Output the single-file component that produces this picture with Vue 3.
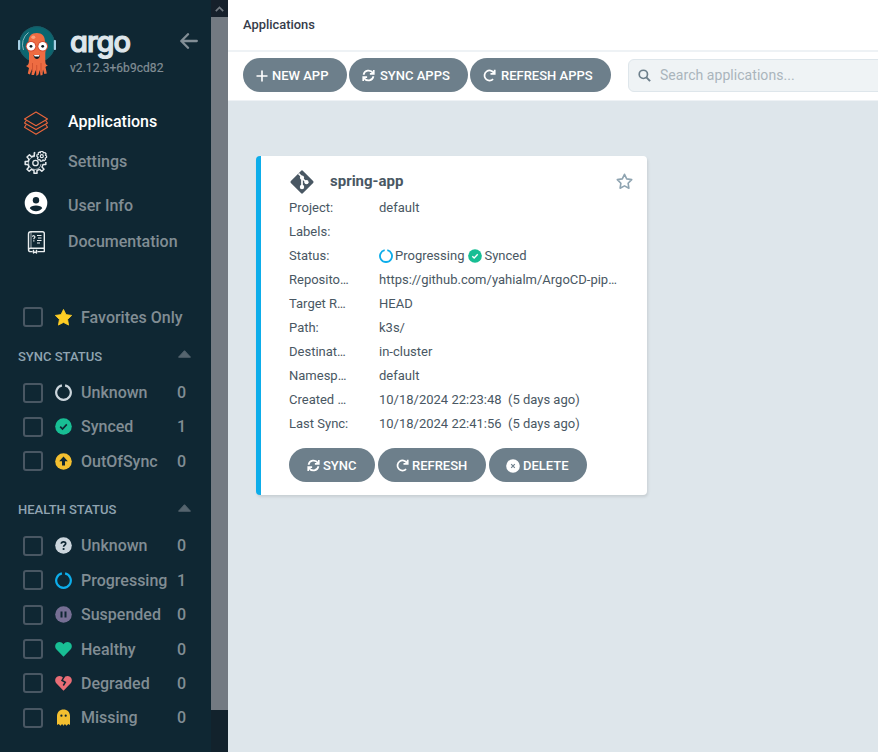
<script setup>
import { h } from 'vue'

const nav = [
  { label: 'Applications', icon: 'layers', active: true },
  { label: 'Settings', icon: 'gears' },
  { label: 'User Info', icon: 'user' },
  { label: 'Documentation', icon: 'book' },
]
const groups = [
  {
    title: 'SYNC STATUS',
    items: [
      { label: 'Unknown', icon: 'ring', color: '#ccd6dd', count: 0 },
      { label: 'Synced', icon: 'check', color: '#18be94', count: 1 },
      { label: 'OutOfSync', icon: 'up', color: '#f4c030', count: 0 },
    ],
  },
  {
    title: 'HEALTH STATUS',
    items: [
      { label: 'Unknown', icon: 'question', color: '#ccd6dd', count: 0 },
      { label: 'Progressing', icon: 'ring', color: '#0dadea', count: 1 },
      { label: 'Suspended', icon: 'pause', color: '#766f94', count: 0 },
      { label: 'Healthy', icon: 'heart', color: '#18be94', count: 0 },
      { label: 'Degraded', icon: 'broken', color: '#e96d76', count: 0 },
      { label: 'Missing', icon: 'ghost', color: '#f4c030', count: 0 },
    ],
  },
]
const details = [
  ['Project:', 'default'],
  ['Labels:', ''],
  ['Status:', null],
  ['Reposito…', 'https://github.com/yahialm/ArgoCD-pip…'],
  ['Target R…', 'HEAD'],
  ['Path:', 'k3s/'],
  ['Destinat…', 'in-cluster'],
  ['Namesp…', 'default'],
  ['Created …', '10/18/2024 22:23:48  (5 days ago)'],
  ['Last Sync:', '10/18/2024 22:41:56  (5 days ago)'],
]

const STAR = 'M8.5 .4 11 5.6 16.7 6.4 12.6 10.4 13.6 16.1 8.5 13.4 3.4 16.1 4.4 10.4 .3 6.4 6 5.6Z'
const HEART = 'M8.5 15.8 1.5 8.6C-.6 6.300 0 3.100 2 1.800 4.200.4 6.700 1 8.500 3.200 10.300 1 12.800.4 15 1.800 17 3.100 17.600 6.300 15.500 8.600Z'

const Icon = (props) => {
  const c = props.color
  const dark = '#0f2733'
  const disc = () => h('circle', { cx: 8.5, cy: 8.5, r: 8.3, fill: c })
  const shapes = {
    ring: () => [h('path', { d: 'M10.100 1.400A7.300 7.300 0 1 1 6.900 1.400', fill: 'none', stroke: c, 'stroke-width': 2.200 })],
    check: () => [disc(), h('path', { d: 'M5.200 8.700 7.500 11 11.800 6.400', fill: 'none', stroke: props.ink || dark, 'stroke-width': 1.700 })],
    up: () => [disc(), h('path', { d: 'M8.500 3.600 12.800 8.300H10V12.600H7V8.300H4.200Z', fill: dark })],
    question: () => [disc(), h('path', { d: 'M6.300 6.700C6.500 4.400 10.700 4.200 10.700 6.600 10.700 8.200 8.600 8 8.600 9.700', fill: 'none', stroke: dark, 'stroke-width': 1.700 }), h('circle', { cx: 8.6, cy: 12, r: 1.1, fill: dark })],
    pause: () => [disc(), h('path', { d: 'M6.500 5.500V11.500M10.500 5.500V11.500', stroke: dark, 'stroke-width': 2 })],
    heart: () => [h('path', { d: HEART, fill: c })],
    broken: () => [h('path', { d: HEART, fill: c }), h('path', { d: 'M9.300 1.500 7 5.500 10.300 7.300 8.300 10.500', fill: 'none', stroke: dark, 'stroke-width': 1.500 })],
    ghost: () => [
      h('path', { d: 'M2 16V7.300C2 3 4.800.4 8.500.4S15 3 15 7.300V16L13.300 15 11.500 16.700 9.900 15 8.500 16.700 7.100 15 5.500 16.700 3.700 15Z', fill: c }),
      h('circle', { cx: 6.4, cy: 6.7, r: 1.1, fill: dark }),
      h('circle', { cx: 10.7, cy: 6.7, r: 1.1, fill: dark }),
    ],
    star: () => [h('path', { d: STAR, fill: c, stroke: c, 'stroke-width': 0.8, 'stroke-linejoin': 'round' })],
    staro: () => [h('path', { d: 'M8.500 1.300 10.700 5.900 15.700 6.600 12.100 10.200 12.900 15.200 8.500 12.900 4.100 15.200 4.900 10.200 1.300 6.600 6.300 5.900Z', fill: 'none', stroke: c, 'stroke-width': 1.600, 'stroke-linejoin': 'round' })],
    plus: () => [h('path', { d: 'M8.500 1.500V15.500M1.500 8.500H15.500', stroke: c, 'stroke-width': 2.300, 'stroke-linecap': 'round' })],
    sync: () => [h('path', { d: 'M2 7.500A6.700 6.700 0 0 1 14.300 5.300M15 9.500A6.700 6.700 0 0 1 2.700 11.700M15.400 1.200V6.300H10.300M1.600 15.800V10.700H6.700', fill: 'none', stroke: c, 'stroke-width': 2.200 })],
    redo: () => [h('path', { d: 'M14.300 5.300A6.600 6.600 0 1 0 13.200 13.200M15.300 1V6.500H9.800', fill: 'none', stroke: c, 'stroke-width': 2.300 })],
    times: () => [disc(), h('path', { d: 'M6.300 6.300 10.700 10.700M10.700 6.300 6.300 10.700', stroke: '#6d7f8b', 'stroke-width': 1.400 })],
    search: () => [h('circle', { cx: 7, cy: 7, r: 5.4, fill: 'none', stroke: c, 'stroke-width': 2.200 }), h('path', { d: 'M11 11 15.800 15.800', stroke: c, 'stroke-width': 2.600 })],
  }
  return h('svg', { viewBox: '0 0 17 17', width: props.size || 17, height: props.size || 17 }, shapes[props.name]())
}
Icon.props = ['name', 'color', 'size', 'ink']
</script>

<template>
  <div class="page">
    <aside class="sidebar">
      <header class="brand">
        <svg class="octopus" width="40" height="52" viewBox="17 25 40 52">
          <circle cx="37" cy="44.300" r="18" fill="#0b6670" />
          <circle cx="37" cy="44.300" r="17.500" fill="none" stroke="#1c5965" />
          <path d="M23.500 50A15 15 0 0 1 28.500 32.500" fill="none" stroke="#86b7bd" stroke-width="1" />
          <rect x="18" y="40" width="2.200" height="10" rx=".8" fill="#a6cfe4" />
          <rect x="53.800" y="40" width="2.200" height="10" rx=".8" fill="#a6cfe4" />
          <path d="M28.500 42C28.500 36 31.500 33 36.800 33S45 36 45 42C46.500 46 45.800 50 45.300 53V61C45.500 64 46 65.500 48 65L45.500 67 46.800 73.500 44.300 74 43 69.500 42.500 75 40.500 75.500 39.800 70 38.500 74.500 36.500 76 35.800 70 34 75 31.500 75 32 69 29.800 74.500 27.800 73.500 29 68 26 66C28.500 65.500 29 63 29 60V53C27.500 50 27 46 28.500 42Z" fill="#ee6c42" />
          <path d="M32.500 63V72M36.700 65V75M41 63V73" stroke="#c94d2d" stroke-width=".8" />
          <ellipse cx="33.300" cy="37.300" rx="2" ry="1.700" fill="#f8a17d" />
          <circle cx="31" cy="46.300" r="5.300" fill="#d64b32" />
          <circle cx="42.700" cy="46.300" r="5.300" fill="#d64b32" />
          <circle cx="31" cy="46.300" r="4.300" fill="#fff" />
          <circle cx="42.700" cy="46.300" r="4.300" fill="#fff" />
          <circle cx="31" cy="46.300" r="1.400" fill="#101c24" />
          <circle cx="42.700" cy="46.300" r="1.400" fill="#101c24" />
          <path d="M33.500 55H40C39.600 60.300 34.200 60.300 33.500 55Z" fill="#101c24" />
          <path d="M34 55H39.500L39 56.500H34.700Z" fill="#fff" />
        </svg>
        <div class="names">
          <div class="wordmark">argo</div>
          <div class="version">v2.12.3+6b9cd82</div>
        </div>
        <svg class="back" width="18" height="16" viewBox="0 0 18 16" fill="none" stroke="#828e96" stroke-width="2.300" stroke-linecap="round" stroke-linejoin="round">
          <path d="M8 1.200 1.300 8 8 14.800M1.500 8H16.800" />
        </svg>
      </header>

      <nav class="nav">
        <div v-for="n in nav" :key="n.label" class="nav-item" :class="[n.icon, { active: n.active }]">
          <svg v-if="n.icon === 'layers'" width="26" height="26" viewBox="0 0 26 26" fill="none" stroke="#e9653b" stroke-width="1.100" stroke-linejoin="round">
            <path d="M13 2 24.500 9 13 15.800 1.500 9Z" />
            <path d="M3.500 10.300 1.500 13 13 19.600 24.500 13 22.500 10.300" />
            <path d="M3.500 14.200 1.500 17.300 13 24.300 24.500 17.300 22.500 14.200" />
          </svg>
          <svg v-else-if="n.icon === 'gears'" width="26" height="26" viewBox="0 0 26 26" fill="none" stroke="#e6ebee" stroke-linejoin="round">
            <circle cx="12.500" cy="14" r="2.700" stroke-width="1.300" />
            <path d="M12.300 3.500 11.300 4V6.700L8.500 7.700 6.500 5.700 4 8 6 10.200 5 12.600H2.200V15.600H5L6 18 4 20.200 6.200 22.300 8.400 20.400 11 21.500V24.300H14V21.500L16.600 20.400 18.800 22.300 21 20.200 19 18 20 15.600H22.800V13" stroke-width="1.500" />
            <path d="M12 7.500A6.500 6.500 0 0 0 12 20.500 6.500 6.500 0 0 0 18 15" stroke-width=".7" />
            <circle cx="18.800" cy="7.200" r="1.500" stroke-width="1.200" />
            <path d="M17.700 2.500H19.900L20.300 4 21.800 3.500 23.200 5 22.400 6.200 23.600 7V8.500L22.200 9 22.600 10.500 21 11.800 19.900 10.800 19 12.200H17.500L17 10.600 15.400 10.800 14.400 9.400 15.200 8.200 13.900 7.400V5.900L15.400 5.500 15.200 4 16.500 3 17.400 3.800Z" stroke-width="1.200" />
          </svg>
          <svg v-else-if="n.icon === 'user'" width="26" height="26" viewBox="0 0 26 26">
            <circle cx="13" cy="13" r="11.300" fill="#fff" />
            <circle cx="13" cy="10.200" r="3.200" fill="#0f2733" />
            <path d="M6.800 18.300C7.500 14.500 18.500 14.500 19.200 18.300 16 22.200 10 22.200 6.800 18.300Z" fill="#0f2733" />
          </svg>
          <svg v-else width="26" height="26" viewBox="0 0 26 26" fill="none" stroke="#e9edef" stroke-width="1.400" stroke-linejoin="round">
            <path d="M5.500 20.500V5C5.500 3.400 6.300 2.700 7.700 2.700H19.500C20.700 2.700 21.300 3.300 21.300 4.500V19.300H7.700C4.800 19.300 4.800 22.600 7.700 22.600H9.500M14.500 22.600H21.300V19.300M10.500 20.700V24L12 23 13.500 24V20.700" />
            <path d="M8 3V19" stroke-width=".7" />
            <path d="M14 6.500H18.500M15 9H18.500M14 11.500H18.500M14 14H17" stroke-width="1.200" />
            <path d="M9.500 7.800C9.600 6.300 11.900 6.400 11.900 7.900 11.900 9 10.800 8.900 10.800 10.300M10.800 11.200V12.400" stroke-width="1.200" />
          </svg>
          <span>{{ n.label }}</span>
        </div>
      </nav>

      <div class="filter favorites">
        <i class="box"></i>
        <Icon name="star" color="#ffce25" />
        <span class="label">Favorites Only</span>
      </div>
      <section v-for="(g, i) in groups" :key="g.title" class="group" :class="{ later: i }">
        <div class="group-title">
          <span>{{ g.title }}</span>
          <svg width="13" height="8" viewBox="0 0 13 8"><path d="M6.500 .7 12.500 7.200H.5Z" fill="#56656f" stroke="#56656f" stroke-linejoin="round" /></svg>
        </div>
        <div v-for="f in g.items" :key="f.label" class="filter">
          <i class="box"></i>
          <Icon :name="f.icon" :color="f.color" />
          <span class="label">{{ f.label }}</span>
          <span class="count">{{ f.count }}</span>
        </div>
      </section>
    </aside>

    <div class="scrollbar">
      <div class="scroll-up">
        <svg width="9" height="6" viewBox="0 0 9 6"><path d="M.8 5.200 4.500 1.500 8.200 5.200" fill="none" stroke="#737a82" stroke-width="1.700" /></svg>
      </div>
      <div class="thumb"></div>
    </div>

    <main class="main">
      <header class="topbar">Applications</header>
      <div class="toolbar">
        <button class="btn new"><Icon name="plus" color="#fff" :size="12" />NEW APP</button>
        <button class="btn syncs"><Icon name="sync" color="#fff" :size="13" />SYNC APPS</button>
        <button class="btn refreshes"><Icon name="redo" color="#fff" :size="13" />REFRESH APPS</button>
        <div class="search"><Icon name="search" color="#6d7f8b" :size="13" /><span>Search applications...</span></div>
      </div>
      <div class="content">
        <article class="card">
          <div class="card-head">
            <svg width="26" height="26" viewBox="0 0 26 26">
              <rect x="4.400" y="4.400" width="17.200" height="17.200" rx="1.500" transform="rotate(45 13 13)" fill="#495763" />
              <path d="M9.500 4.500 13 8V18M13 9 17.500 13.500" fill="none" stroke="#fff" stroke-width="1.700" />
              <circle cx="13" cy="8.700" r="2.100" fill="#fff" />
              <circle cx="13" cy="18" r="2.200" fill="#fff" />
              <circle cx="17.500" cy="13.200" r="2.100" fill="#fff" />
            </svg>
            <span class="name">spring-app</span>
            <Icon name="staro" color="#8fa4b1" />
          </div>
          <div v-for="d in details" :key="d[0]" class="detail">
            <span class="key">{{ d[0] }}</span>
            <span v-if="d[1] !== null" class="value">{{ d[1] }}</span>
            <span v-else class="value status">
              <Icon name="ring" color="#0dadea" :size="14" /><span>Progressing</span>
              <Icon name="check" color="#18be94" ink="#fff" :size="14" /><span>Synced</span>
            </span>
          </div>
          <div class="actions">
            <button class="btn sync"><Icon name="sync" color="#fff" :size="13" />SYNC</button>
            <button class="btn refresh"><Icon name="redo" color="#fff" :size="13" />REFRESH</button>
            <button class="btn delete"><Icon name="times" color="#fff" :size="14" />DELETE</button>
          </div>
        </article>
      </div>
    </main>
  </div>
</template>

<style>
body { overflow: hidden; }
</style>

<style scoped>
* { box-sizing: border-box; }
.page {
  display: flex;
  width: 878px;
  height: 752px;
  overflow: hidden;
  font-family: Roboto, "Liberation Sans", sans-serif;
  background: #dee6eb;
}
svg { display: block; flex: none; }
.sidebar { width: 211px; flex: none; background: #0f2733; color: #818d94; font-weight: 500; }
.brand { height: 101px; display: flex; padding: 25px 0 0 17px; }
.names { width: 110px; margin-left: 12px; }
.wordmark {
  height: 35px;
  padding-left: 1px;
  font: 500 29px/34px Inter, sans-serif;
  font-feature-settings: "cv11", "ss03";
  letter-spacing: -1px;
  color: #dee6eb;
  -webkit-text-stroke: 1.2px #dee6eb;
}
.version { margin-left: 1px; font-size: 12px; line-height: 16px; font-weight: 400; letter-spacing: 0.05px; -webkit-text-stroke: 0.2px #818d94; }
.back { margin: 8px 0 0 1px; }
.nav-item { display: flex; align-items: center; height: 40px; padding-left: 23px; font-size: 16px; }
.nav-item span { margin-left: 19px; }
.nav-item.active { color: #fff; }
.nav-item.layers svg { margin-top: 3px; }
.nav-item.gears svg { margin-top: 2px; }
.nav-item.user { margin-top: 4px; }
.nav-item.user svg { margin-top: -5px; }
.nav-item.book { height: 32px; }
.nav-item.book svg { margin-top: 2px; }
.filter { display: flex; align-items: center; height: 34.400px; padding: 0 25px 0 23px; font-size: 16px; }
.favorites { margin-top: 43.150px; }
.box { width: 20px; height: 20px; flex: none; margin-right: 12px; border: 2px solid #495763; border-radius: 3px; }
.label { margin-left: 9px; white-space: nowrap; }
.count { margin-left: auto; }
.group-title { display: flex; align-items: center; justify-content: space-between; height: 40.800px; padding: 0 20px 0 18px; font-size: 13px; color: #8fa4b1; }
.group-title span { padding-top: 3px; }
.group-title svg { margin-top: -1px; }
.later { margin-top: 9.400px; }
.scrollbar { width: 17px; flex: none; background: #12222c; }
.scroll-up { display: flex; align-items: center; justify-content: center; height: 17px; background: #16202b; }
.thumb { height: 693px; background: #737a82; }
.main { flex: 1; min-width: 0; }
.topbar { height: 52px; border-bottom: 2px solid #eef2f5; background: #fff; padding-left: 15px; font-size: 12.900px; font-weight: 500; line-height: 50px; color: #363c4a; }
.toolbar { display: flex; align-items: center; height: 49px; padding: 0 0 2px 15px; border-bottom: 1px solid #eef2f5; background: #fff; }
.btn { display: flex; align-items: center; flex: none; height: 34px; padding: 1px 0 0; border: 0; border-radius: 17px; background: #6d7f8b; color: #fff; font: 500 13px/34px Roboto, sans-serif; white-space: nowrap; }
.btn svg { margin-right: 5px; }
.new { width: 104px; padding-left: 13px; }
.new svg { margin-right: 4px; }
.syncs { width: 119px; margin-left: 2px; padding-left: 13px; }
.refreshes { width: 141px; margin-left: 2px; padding-left: 13px; }
.search { display: flex; align-items: center; flex: none; width: 280px; height: 33px; margin: 1px 0 0 17px; padding-left: 9px; border: 1px solid #dee6eb; border-radius: 6px; background: #eff3f5; font-size: 14px; color: #aab5bc; }
.search span { margin-left: 9px; padding-bottom: 1px; letter-spacing: 0.05px; }
.content { padding: 55px 28px; }
.card { width: 391px; height: 339px; padding: 11px 14px 0 28px; border-left: 5px solid #0dadea; border-radius: 4px; background: #fff; box-shadow: 1px 2px 3px rgba(0, 0, 0, 0.1); color: #495763; font-size: 13px; }
.card-head { display: flex; align-items: center; height: 28px; margin-bottom: 1px; }
.card-head svg { margin-top: 1px; }
.name { flex: 1; margin-left: 15px; font-size: 15px; font-weight: 700; }
.detail { display: flex; height: 24px; line-height: 24px; white-space: pre; }
.key { width: 90px; }
.status { display: flex; align-items: center; }
.status svg { margin-right: 2px; }
.status span + svg { margin-left: 4px; }
.actions { display: flex; margin-top: 12px; }
.actions .btn svg { margin-right: 3px; }
.sync { width: 86px; padding-left: 18px; }
.refresh { width: 108px; margin-left: 3px; padding-left: 18px; }
.delete { width: 98px; margin-left: 3px; padding-left: 17px; }
</style>
